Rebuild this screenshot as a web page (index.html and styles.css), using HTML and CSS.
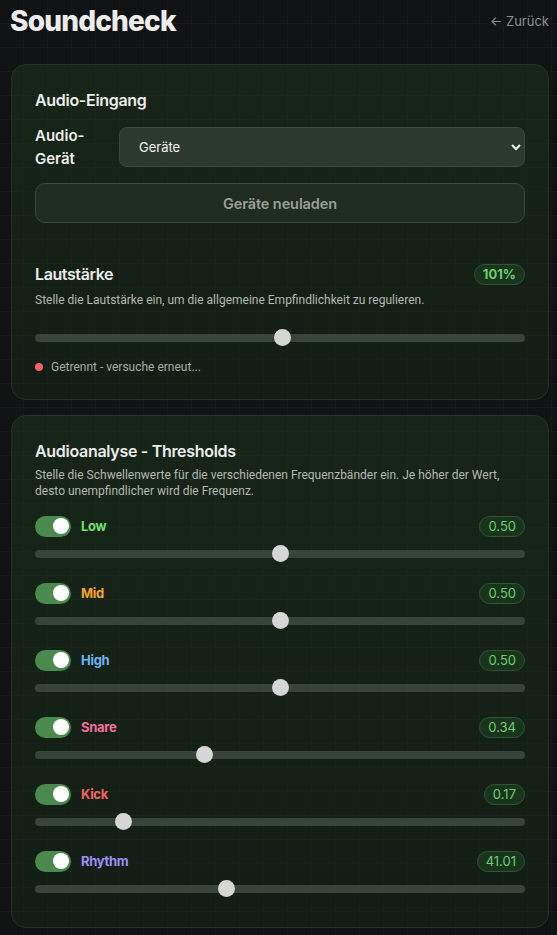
FILE: index.html
```html
<!DOCTYPE html>
<html lang="de">
<head>
<meta charset="utf-8">
<title>Soundcheck</title>
<link rel="stylesheet" href="styles.css">
</head>
<body>
<div class="wrap">
	<header class="top">
		<h1 class="title">Soundcheck</h1>
		<a class="back" href="">&larr; Zurück</a>
	</header>

	<section class="card">
		<h2 class="card_title">Audio-Eingang</h2>
		<div class="device_row">
			<label class="device_label" for="device">Audio-Gerät</label>
			<select class="device_select" id="device">
				<option>Geräte</option>
			</select>
		</div>
		<button class="reload_btn" type="button">Geräte neuladen</button>

		<div class="volume">
			<div class="row_head">
				<h3 class="sub_title">Lautstärke</h3>
				<span class="badge badge_bold">101%</span>
			</div>
			<p class="desc">Stelle die Lautstärke ein, um die allgemeine Empfindlichkeit zu regulieren.</p>
			<input class="slider volume_slider" type="range" min="0" max="200" value="101">
			<div class="status"><span class="dot"></span>Getrennt - versuche erneut...</div>
		</div>
	</section>

	<section class="card card_bands">
		<h2 class="card_title">Audioanalyse - Thresholds</h2>
		<p class="desc">Stelle die Schwellenwerte für die verschiedenen Frequenzbänder ein. Je höher der Wert, desto unempfindlicher wird die Frequenz.</p>

		<div class="bands">
			<div class="band">
				<div class="row_head">
					<label class="toggle"><input type="checkbox" checked><span class="knob"></span></label>
					<span class="band_name low">Low</span>
					<span class="badge">0.50</span>
				</div>
				<input class="slider" type="range" min="0" max="1" step="0.01" value="0.50">
			</div>
			<div class="band">
				<div class="row_head">
					<label class="toggle"><input type="checkbox" checked><span class="knob"></span></label>
					<span class="band_name mid">Mid</span>
					<span class="badge">0.50</span>
				</div>
				<input class="slider" type="range" min="0" max="1" step="0.01" value="0.50">
			</div>
			<div class="band">
				<div class="row_head">
					<label class="toggle"><input type="checkbox" checked><span class="knob"></span></label>
					<span class="band_name high">High</span>
					<span class="badge">0.50</span>
				</div>
				<input class="slider" type="range" min="0" max="1" step="0.01" value="0.50">
			</div>
			<div class="band">
				<div class="row_head">
					<label class="toggle"><input type="checkbox" checked><span class="knob"></span></label>
					<span class="band_name snare">Snare</span>
					<span class="badge">0.34</span>
				</div>
				<input class="slider" type="range" min="0" max="1" step="0.01" value="0.34">
			</div>
			<div class="band">
				<div class="row_head">
					<label class="toggle"><input type="checkbox" checked><span class="knob"></span></label>
					<span class="band_name kick">Kick</span>
					<span class="badge">0.17</span>
				</div>
				<input class="slider" type="range" min="0" max="1" step="0.01" value="0.17">
			</div>
			<div class="band">
				<div class="row_head">
					<label class="toggle"><input type="checkbox" checked><span class="knob"></span></label>
					<span class="band_name rhythm">Rhythm</span>
					<span class="badge">41.01</span>
				</div>
				<input class="slider" type="range" min="0" max="106" step="0.01" value="41.01">
			</div>
		</div>
	</section>
</div>
</body>
</html>
```

FILE: styles.css
```css
* {margin:0; padding:0; box-sizing:border-box}

html, body {
	height:100%;
}
body {
	background-color:#111214;
	background-image:
		linear-gradient(rgba(255,255,255,0.025) 1px, transparent 1px),
		linear-gradient(90deg, rgba(255,255,255,0.025) 1px, transparent 1px);
	background-size:24px 24px;
	background-position:-1px -1px;
	color:#ececec;
	font-family:Inter, "Noto Sans", sans-serif;
}

.wrap {
	padding:0 8px 0 11px;
}

/* header */
.top {
	display:flex;
	justify-content:space-between;
	align-items:center;
	height:42px;
	margin-bottom:22px;
}
.title {
	font-size:28px;
	font-weight:800;
	letter-spacing:-0.8px;
	margin-left:-1px;
}
.back {
	color:#8b8e92;
	font-size:13px;
	text-decoration:none;
}

/* cards */
.card {
	border:1px solid #243326;
	border-radius:15px;
	background:linear-gradient(180deg, rgba(30,60,30,0.45), rgba(20,45,22,0.4));
	padding:23px 23px 24px;
	margin-bottom:15px;
}
.card_title {
	font-size:16px;
	font-weight:600;
	line-height:24px;
	letter-spacing:-0.3px;
}
.card_title + .desc {
	margin-top:4px;
}

.device_row {
	display:flex;
	align-items:center;
	gap:14px;
	margin-top:12px;
}
.device_label {
	width:70px;
	font-size:15px;
	font-weight:600;
	line-height:23px;
}
.device_select {
	flex:1;
	height:40px;
	padding:0 10px 0 15px;
	background-color:#2b3a2d;
	border:1px solid #3a4b3c;
	border-radius:8px;
	color:#f2f2f2;
	font-family:Inter, sans-serif;
	font-size:13px;
}
.reload_btn {
	display:block;
	width:100%;
	height:40px;
	margin-top:13px;
	background-color:#1f2c21;
	border:1px solid #3a4a3c;
	border-radius:10px;
	color:#9a9f9b;
	font-family:Inter, sans-serif;
	font-size:14.5px;
	font-weight:600;
	letter-spacing:-0.1px;
}

.volume {
	margin-top:40px;
}
.row_head {
	display:flex;
	align-items:center;
	height:22px;
}
.sub_title {
	flex:1;
	font-size:16px;
	font-weight:600;
	letter-spacing:-0.4px;
}
.badge {
	margin-left:auto;
	padding:0 8px;
	height:21px;
	line-height:19px;
	border:1px solid #2e5532;
	border-radius:11px;
	background-color:#1a331d;
	color:#6ccf6f;
	font-size:13px;
}
.badge_bold {
	font-weight:700;
}
.desc {
	margin-top:7px;
	color:#b4b8b4;
	font-family:Roboto, sans-serif;
	font-size:12px;
	line-height:16px;
}

/* range */
.slider {
	-webkit-appearance:none;
	appearance:none;
	display:block;
	width:100%;
	height:17px;
	background:transparent;
}
.slider::-webkit-slider-runnable-track {
	height:8px;
	border-radius:4px;
	background-color:#36443a;
}
.slider::-webkit-slider-thumb {
	-webkit-appearance:none;
	width:17px;
	height:17px;
	margin-top:-4.5px;
	border-radius:50%;
	background-color:#d6d6d6;
}
.volume_slider {
	margin-top:21px;
}

.status {
	display:flex;
	align-items:center;
	margin-top:13px;
	color:#a7aca7;
	font-family:Roboto, sans-serif;
	font-size:12px;
	line-height:16px;
}
.dot {
	width:8px;
	height:8px;
	margin-right:8px;
	border-radius:50%;
	background-color:#f26161;
}

/* bands */
.card_bands {
	padding-bottom:30px;
}
.bands {
	margin-top:16px;
}
.band + .band {
	margin-top:20px;
}
.band .slider {
	margin-top:8px;
}
.toggle {
	position:relative;
	display:block;
	width:36px;
	height:21px;
	border-radius:11px;
	background-color:#4b8a4f;
}
.toggle input {
	display:none;
}
.knob {
	position:absolute;
	top:2.5px;
	right:2.5px;
	width:16px;
	height:16px;
	border-radius:50%;
	background-color:#fff;
}
.band_name {
	margin-left:10px;
	font-size:13px;
	font-weight:700;
	letter-spacing:-0.3px;
}
.low {color:#6ee06f}
.mid {color:#f5a524}
.high {color:#6eb2f4}
.snare {color:#f2709f}
.kick {color:#f26464}
.rhythm {color:#9d90f5}
```
